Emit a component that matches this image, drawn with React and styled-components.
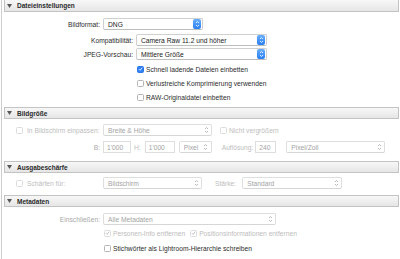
import React from 'react';
import styled, { createGlobalStyle } from 'styled-components';

const GlobalStyle = createGlobalStyle`
  html, body { margin: 0; padding: 0; background: #fff; }
  body {
    font-family: "Liberation Sans", Arial, sans-serif;
    font-size: 6.7px;
    color: #2c2c2c;
  }
`;

const Page = styled.div`
  width: 400px;
  height: 259px;
  overflow: hidden;
  background: #fff;
`;

const Panel = styled.div`
  margin-left: 1px;
  height: 100%;
  border-left: 1px solid #cdcdcd;
`;

const Header = styled.div`
  display: flex;
  align-items: center;
  gap: 5px;
  height: ${(p) => (p.$first ? 11 : 10)}px;
  margin: 0 1px 0 2px;
  padding-left: 2px;
  border: 1px solid #c3c3c3;
  border-top: ${(p) => (p.$first ? 'none' : '1px solid #c3c3c3')};
  background: linear-gradient(#f7f7f7, #e6e6e6);
  font-weight: bold;
  font-size: 6.5px;
  color: #2a2a2a;
`;

const Body = styled.div`
  display: flex;
  flex-direction: column;
  padding-bottom: ${(p) => p.$pb || 0}px;
`;

const Row = styled.div`
  display: flex;
  align-items: center;
  height: ${(p) => p.$h || 12}px;
  margin-top: ${(p) => p.$mt || 0}px;
  padding-left: ${(p) => p.$indent || 0}px;
  white-space: nowrap;
`;

const Label = styled.div`
  width: ${(p) => p.$w}px;
  flex-shrink: 0;
  text-align: right;
  padding-right: 3px;
  box-sizing: border-box;
  color: ${(p) => (p.$dim ? '#a9a9a9' : '#2c2c2c')};
`;

const LeadCell = styled.div`
  width: 101px;
  flex-shrink: 0;
  display: flex;
  align-items: center;
  padding-left: 14px;
  box-sizing: border-box;
  gap: 2px;
`;

const Text = styled.span`
  color: ${(p) => (p.$dim ? '#bdbdbd' : '#2c2c2c')};
  margin-left: ${(p) => p.$ml || 0}px;
`;

const SelectBox = styled.div`
  display: flex;
  align-items: center;
  width: ${(p) => p.$w}px;
  height: 12px;
  box-sizing: border-box;
  margin-left: ${(p) => p.$ml || 0}px;
  padding-left: 4px;
  padding-right: 1px;
  background: #fff;
  border: 1px solid ${(p) => (p.$dim ? '#dedede' : '#cfcfcf')};
  border-bottom-color: ${(p) => (p.$dim ? '#d6d6d6' : '#bdbdbd')};
  border-radius: 2px;
  color: ${(p) => (p.$dim ? '#a3a3a3' : '#222')};
  flex-shrink: 0;
`;

const SelectText = styled.span`
  flex: 1;
  overflow: hidden;
`;

const BlueStep = styled.div`
  width: 8px;
  height: 10px;
  border-radius: 2px;
  background: linear-gradient(#69aefb, #2a7ef2);
  display: flex;
  align-items: center;
  justify-content: center;
`;

const GreyStep = styled.div`
  width: 8px;
  height: 10px;
  display: flex;
  align-items: center;
  justify-content: center;
`;

const Field = styled.div`
  width: ${(p) => p.$w}px;
  height: 12px;
  box-sizing: border-box;
  margin-left: ${(p) => p.$ml || 0}px;
  padding-left: 3px;
  display: flex;
  align-items: center;
  border: 1px solid #dedede;
  background: #fff;
  color: #a3a3a3;
  flex-shrink: 0;
`;

const Box = styled.div`
  width: 7px;
  height: 7px;
  box-sizing: border-box;
  border-radius: 1.5px;
  flex-shrink: 0;
  margin-left: ${(p) => p.$ml || 0}px;
  margin-right: 2px;
  display: flex;
  align-items: center;
  justify-content: center;
  background: ${(p) => (p.$on ? '#2f80f4' : '#fff')};
  border: 1px solid ${(p) => (p.$on ? '#2a78ea' : p.$dim ? '#dcdcdc' : '#b4b4b4')};
`;

const Tri = () => (
  <svg width="5" height="4" viewBox="0 0 5 4">
    <polygon points="0,0 5,0 2.5,4" fill="#575757" />
  </svg>
);

const Updown = ({ color }) => (
  <svg width="5" height="8" viewBox="0 0 5 8">
    <path d="M1 3 L2.5 1.5 L4 3 M1 5 L2.5 6.5 L4 5" fill="none" stroke={color} strokeWidth="0.8" />
  </svg>
);

const Tick = ({ color }) => (
  <svg width="6" height="6" viewBox="0 0 6 6">
    <path d="M1 3.2 L2.4 4.6 L5 1.4" fill="none" stroke={color} strokeWidth="1" />
  </svg>
);

function Select({ w, ml, dim, children }) {
  return (
    <SelectBox $w={w} $ml={ml} $dim={dim}>
      <SelectText>{children}</SelectText>
      {dim ? (
        <GreyStep><Updown color="#a8a8a8" /></GreyStep>
      ) : (
        <BlueStep><Updown color="#fff" /></BlueStep>
      )}
    </SelectBox>
  );
}

function Check({ on, dimTick, dim, ml }) {
  return (
    <Box $on={on} $dim={dim} $ml={ml}>
      {on && <Tick color="#fff" />}
      {dimTick && <Tick color="#b5b5b5" />}
    </Box>
  );
}

export default function App() {
  return (
    <Page>
      <GlobalStyle />
      <Panel>
        <Header $first><Tri />Dateieinstellungen</Header>
        <Body $pb={5}>
          <Row $mt={6}>
            <Label $w={101}>Bildformat:</Label>
            <Select w={100}>DNG</Select>
          </Row>
          <Row $mt={4}>
            <Label $w={134}>Kompatibilität:</Label>
            <Select w={131}>Camera Raw 11.2 und höher</Select>
          </Row>
          <Row $mt={2}>
            <Label $w={134}>JPEG-Vorschau:</Label>
            <Select w={131}>Mittlere Größe</Select>
          </Row>
          <Row $mt={4} $h={10} $indent={135}>
            <Check on />
            <Text>Schnell ladende Dateien einbetten</Text>
          </Row>
          <Row $mt={4} $h={10} $indent={135}>
            <Check />
            <Text>Verlustreiche Komprimierung verwenden</Text>
          </Row>
          <Row $mt={4} $h={10} $indent={135}>
            <Check />
            <Text>RAW-Originaldatei einbetten</Text>
          </Row>
        </Body>

        <Header><Tri />Bildgröße</Header>
        <Body $pb={8}>
          <Row $mt={5}>
            <LeadCell>
              <Check dim />
              <Text $dim>In Bildschirm einpassen:</Text>
            </LeadCell>
            <Select w={109} dim>Breite &amp; Höhe</Select>
            <Check dim ml={8} />
            <Text $dim>Nicht vergrößern</Text>
          </Row>
          <Row $mt={5}>
            <Label $w={101} $dim>B:</Label>
            <Field $w={28}>1'000</Field>
            <Text $dim $ml={3}>H:</Text>
            <Field $w={30} $ml={4}>1'000</Field>
            <Select w={33} ml={4} dim>Pixel</Select>
            <Text $dim $ml={10}>Auflösung:</Text>
            <Field $w={21} $ml={2}>240</Field>
            <Select w={99} ml={10} dim>Pixel/Zoll</Select>
          </Row>
        </Body>

        <Header><Tri />Ausgabeschärfe</Header>
        <Body $pb={6}>
          <Row $mt={4}>
            <LeadCell>
              <Check dim />
              <Text $dim>Schärfen für:</Text>
            </LeadCell>
            <Select w={99} dim>Bildschirm</Select>
            <Text $dim $ml={13}>Stärke:</Text>
            <Select w={100} ml={6} dim>Standard</Select>
          </Row>
        </Body>

        <Header><Tri />Metadaten</Header>
        <Body>
          <Row $mt={6}>
            <Label $w={101} $dim>Einschließen:</Label>
            <Select w={173} dim>Alle Metadaten</Select>
          </Row>
          <Row $mt={3} $h={10} $indent={102}>
            <Check dim dimTick />
            <Text $dim>Personen-Info entfernen</Text>
            <Check dim dimTick ml={5} />
            <Text $dim>Positionsinformationen entfernen</Text>
          </Row>
          <Row $mt={5} $h={10} $indent={102}>
            <Check />
            <Text>Stichwörter als Lightroom-Hierarchie schreiben</Text>
          </Row>
        </Body>
      </Panel>
    </Page>
  );
}
